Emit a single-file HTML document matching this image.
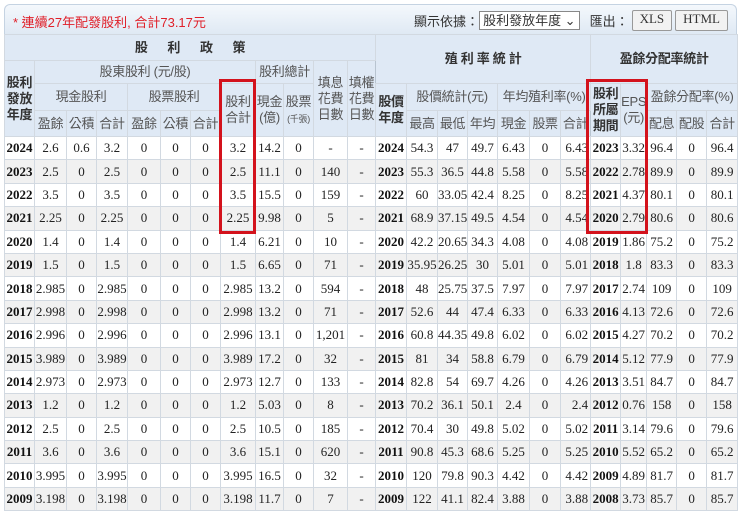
<!DOCTYPE html>
<html><head><meta charset="utf-8">
<style>
body{margin:0;background:#fff;width:740px;height:510px;overflow:hidden;font-family:"Liberation Serif","Noto Serif CJK SC",serif;}
.wrap{position:absolute;left:4px;top:4px;width:733px;}
.bar{height:30px;border:1px solid #c5d3e2;border-bottom:none;border-radius:6px 6px 0 0;background:linear-gradient(#f4f8fc,#dfe9f4);position:relative;box-sizing:border-box;}
.bar .t{position:absolute;left:8px;top:7px;color:#e0202a;font:13px "Liberation Sans","Noto Sans CJK TC",sans-serif;}
.bar .r{position:absolute;right:8px;top:5px;font:13px "Liberation Sans","Noto Sans CJK TC",sans-serif;color:#333;display:flex;align-items:center;}
.sel{border:1px solid #888;background:#fff;height:17px;padding:0 3px;margin-right:10px;line-height:17px;font-size:13px;}
.btn{border:1px solid #999;background:#f2f2f2;height:19px;line-height:19px;padding:0 7px;margin-left:3px;font:13px "Liberation Serif",serif;border-radius:2px;}
table{border-collapse:collapse;table-layout:fixed;width:733px;}
td,th{border:1px solid #d2d9e1;padding:0;text-align:center;overflow:hidden;white-space:nowrap;}
th{background:#dfe9f5;font-family:"Liberation Sans","Noto Sans CJK TC",sans-serif;font-size:13px;font-weight:normal;color:#555;line-height:16px;letter-spacing:-0.3px;}
th.b{font-weight:bold;color:#333;}
td{font-size:13px;color:#222;height:22.4px;}
td.y{font-weight:bold;color:#111;}
tr.g td{background:#f1f1f1;}
.sep{border-left:1px solid #b8c4d0;}
td.rt{text-align:right;padding-right:2px;}
.box{position:absolute;border:3.5px solid #d3121c;box-sizing:border-box;}
</style></head><body>
<div class="wrap">
<div class="bar"><div class="t">* 連續27年配發股利, 合計73.17元</div>
<div class="r">顯示依據：<span class="sel">股利發放年度 ⌄</span>匯出：<span class="btn">XLS</span><span class="btn">HTML</span></div></div>
<table>
<colgroup><col style="width:30px"><col style="width:32px"><col style="width:30px"><col style="width:31px"><col style="width:33px"><col style="width:30px"><col style="width:30px"><col style="width:35px"><col style="width:28px"><col style="width:30px"><col style="width:34px"><col style="width:28px"><col style="width:31px"><col style="width:31px"><col style="width:30px"><col style="width:30px"><col style="width:32px"><col style="width:31px"><col style="width:30px"><col style="width:30px"><col style="width:26px"><col style="width:30px"><col style="width:30px"><col style="width:31px"></colgroup>
<tr style="height:26px"><th colspan="12" class="b">股&nbsp;&nbsp;&nbsp;&nbsp;&nbsp;&nbsp;利&nbsp;&nbsp;&nbsp;&nbsp;&nbsp;&nbsp;政&nbsp;&nbsp;&nbsp;&nbsp;&nbsp;&nbsp;策</th><th colspan="7" rowspan="2" class="b sep">殖 利 率 統 計</th><th colspan="5" rowspan="2" class="b sep">盈餘分配率統計</th></tr>
<tr style="height:23px"><th rowspan="3" class="b">股利<br>發放<br>年度</th><th colspan="7">股東股利 (元/股)</th><th colspan="2">股利總計</th><th rowspan="3">填息<br>花費<br>日數</th><th rowspan="3">填權<br>花費<br>日數</th></tr>
<tr style="height:27px"><th colspan="3">現金股利</th><th colspan="3">股票股利</th><th rowspan="2">股利<br>合計</th><th rowspan="2">現金<br>(億)</th><th rowspan="2">股票<br><span style="font-size:9px">(千張)</span></th><th rowspan="2" class="b sep">股價<br>年度</th><th colspan="3">股價統計(元)</th><th colspan="3">年均殖利率(%)</th><th rowspan="2" class="b sep">股利<br>所屬<br>期間</th><th rowspan="2">EPS<br>(元)</th><th colspan="3">盈餘分配率(%)</th></tr>
<tr style="height:26px"><th>盈餘</th><th>公積</th><th>合計</th><th>盈餘</th><th>公積</th><th>合計</th><th>最高</th><th>最低</th><th>年均</th><th>現金</th><th>股票</th><th>合計</th><th>配息</th><th>配股</th><th>合計</th></tr>
<tr><td class="y">2024</td><td>2.6</td><td>0.6</td><td>3.2</td><td>0</td><td>0</td><td>0</td><td>3.2</td><td>14.2</td><td>0</td><td>-</td><td>-</td><td class="y sep">2024</td><td>54.3</td><td>47</td><td>49.7</td><td>6.43</td><td>0</td><td class="rt">6.43</td><td class="y sep">2023</td><td>3.32</td><td>96.4</td><td>0</td><td>96.4</td></tr>
<tr class="g"><td class="y">2023</td><td>2.5</td><td>0</td><td>2.5</td><td>0</td><td>0</td><td>0</td><td>2.5</td><td>11.1</td><td>0</td><td>140</td><td>-</td><td class="y sep">2023</td><td>55.3</td><td>36.5</td><td>44.8</td><td>5.58</td><td>0</td><td class="rt">5.58</td><td class="y sep">2022</td><td>2.78</td><td>89.9</td><td>0</td><td>89.9</td></tr>
<tr><td class="y">2022</td><td>3.5</td><td>0</td><td>3.5</td><td>0</td><td>0</td><td>0</td><td>3.5</td><td>15.5</td><td>0</td><td>159</td><td>-</td><td class="y sep">2022</td><td>60</td><td>33.05</td><td>42.4</td><td>8.25</td><td>0</td><td class="rt">8.25</td><td class="y sep">2021</td><td>4.37</td><td>80.1</td><td>0</td><td>80.1</td></tr>
<tr class="g"><td class="y">2021</td><td>2.25</td><td>0</td><td>2.25</td><td>0</td><td>0</td><td>0</td><td>2.25</td><td>9.98</td><td>0</td><td>5</td><td>-</td><td class="y sep">2021</td><td>68.9</td><td>37.15</td><td>49.5</td><td>4.54</td><td>0</td><td class="rt">4.54</td><td class="y sep">2020</td><td>2.79</td><td>80.6</td><td>0</td><td>80.6</td></tr>
<tr><td class="y">2020</td><td>1.4</td><td>0</td><td>1.4</td><td>0</td><td>0</td><td>0</td><td>1.4</td><td>6.21</td><td>0</td><td>10</td><td>-</td><td class="y sep">2020</td><td>42.2</td><td>20.65</td><td>34.3</td><td>4.08</td><td>0</td><td class="rt">4.08</td><td class="y sep">2019</td><td>1.86</td><td>75.2</td><td>0</td><td>75.2</td></tr>
<tr class="g"><td class="y">2019</td><td>1.5</td><td>0</td><td>1.5</td><td>0</td><td>0</td><td>0</td><td>1.5</td><td>6.65</td><td>0</td><td>71</td><td>-</td><td class="y sep">2019</td><td>35.95</td><td>26.25</td><td>30</td><td>5.01</td><td>0</td><td class="rt">5.01</td><td class="y sep">2018</td><td>1.8</td><td>83.3</td><td>0</td><td>83.3</td></tr>
<tr><td class="y">2018</td><td>2.985</td><td>0</td><td>2.985</td><td>0</td><td>0</td><td>0</td><td>2.985</td><td>13.2</td><td>0</td><td>594</td><td>-</td><td class="y sep">2018</td><td>48</td><td>25.75</td><td>37.5</td><td>7.97</td><td>0</td><td class="rt">7.97</td><td class="y sep">2017</td><td>2.74</td><td>109</td><td>0</td><td>109</td></tr>
<tr class="g"><td class="y">2017</td><td>2.998</td><td>0</td><td>2.998</td><td>0</td><td>0</td><td>0</td><td>2.998</td><td>13.2</td><td>0</td><td>71</td><td>-</td><td class="y sep">2017</td><td>52.6</td><td>44</td><td>47.4</td><td>6.33</td><td>0</td><td class="rt">6.33</td><td class="y sep">2016</td><td>4.13</td><td>72.6</td><td>0</td><td>72.6</td></tr>
<tr><td class="y">2016</td><td>2.996</td><td>0</td><td>2.996</td><td>0</td><td>0</td><td>0</td><td>2.996</td><td>13.1</td><td>0</td><td>1,201</td><td>-</td><td class="y sep">2016</td><td>60.8</td><td>44.35</td><td>49.8</td><td>6.02</td><td>0</td><td class="rt">6.02</td><td class="y sep">2015</td><td>4.27</td><td>70.2</td><td>0</td><td>70.2</td></tr>
<tr class="g"><td class="y">2015</td><td>3.989</td><td>0</td><td>3.989</td><td>0</td><td>0</td><td>0</td><td>3.989</td><td>17.2</td><td>0</td><td>32</td><td>-</td><td class="y sep">2015</td><td>81</td><td>34</td><td>58.8</td><td>6.79</td><td>0</td><td class="rt">6.79</td><td class="y sep">2014</td><td>5.12</td><td>77.9</td><td>0</td><td>77.9</td></tr>
<tr><td class="y">2014</td><td>2.973</td><td>0</td><td>2.973</td><td>0</td><td>0</td><td>0</td><td>2.973</td><td>12.7</td><td>0</td><td>133</td><td>-</td><td class="y sep">2014</td><td>82.8</td><td>54</td><td>69.7</td><td>4.26</td><td>0</td><td class="rt">4.26</td><td class="y sep">2013</td><td>3.51</td><td>84.7</td><td>0</td><td>84.7</td></tr>
<tr class="g"><td class="y">2013</td><td>1.2</td><td>0</td><td>1.2</td><td>0</td><td>0</td><td>0</td><td>1.2</td><td>5.03</td><td>0</td><td>8</td><td>-</td><td class="y sep">2013</td><td>70.2</td><td>36.1</td><td>50.1</td><td>2.4</td><td>0</td><td class="rt">2.4</td><td class="y sep">2012</td><td>0.76</td><td>158</td><td>0</td><td>158</td></tr>
<tr><td class="y">2012</td><td>2.5</td><td>0</td><td>2.5</td><td>0</td><td>0</td><td>0</td><td>2.5</td><td>10.5</td><td>0</td><td>185</td><td>-</td><td class="y sep">2012</td><td>70.4</td><td>30</td><td>49.8</td><td>5.02</td><td>0</td><td class="rt">5.02</td><td class="y sep">2011</td><td>3.14</td><td>79.6</td><td>0</td><td>79.6</td></tr>
<tr class="g"><td class="y">2011</td><td>3.6</td><td>0</td><td>3.6</td><td>0</td><td>0</td><td>0</td><td>3.6</td><td>15.1</td><td>0</td><td>620</td><td>-</td><td class="y sep">2011</td><td>90.8</td><td>45.3</td><td>68.6</td><td>5.25</td><td>0</td><td class="rt">5.25</td><td class="y sep">2010</td><td>5.52</td><td>65.2</td><td>0</td><td>65.2</td></tr>
<tr><td class="y">2010</td><td>3.995</td><td>0</td><td>3.995</td><td>0</td><td>0</td><td>0</td><td>3.995</td><td>16.5</td><td>0</td><td>32</td><td>-</td><td class="y sep">2010</td><td>120</td><td>79.8</td><td>90.3</td><td>4.42</td><td>0</td><td class="rt">4.42</td><td class="y sep">2009</td><td>4.89</td><td>81.7</td><td>0</td><td>81.7</td></tr>
<tr class="g"><td class="y">2009</td><td>3.198</td><td>0</td><td>3.198</td><td>0</td><td>0</td><td>0</td><td>3.198</td><td>11.7</td><td>0</td><td>7</td><td>-</td><td class="y sep">2009</td><td>122</td><td>41.1</td><td>82.4</td><td>3.88</td><td>0</td><td class="rt">3.88</td><td class="y sep">2008</td><td>3.73</td><td>85.7</td><td>0</td><td>85.7</td></tr>
</table>
</div>
<div class="box" style="left:219px;top:79px;width:37px;height:155px"></div>
<div class="box" style="left:586px;top:79px;width:62px;height:155px"></div>
</body></html>
